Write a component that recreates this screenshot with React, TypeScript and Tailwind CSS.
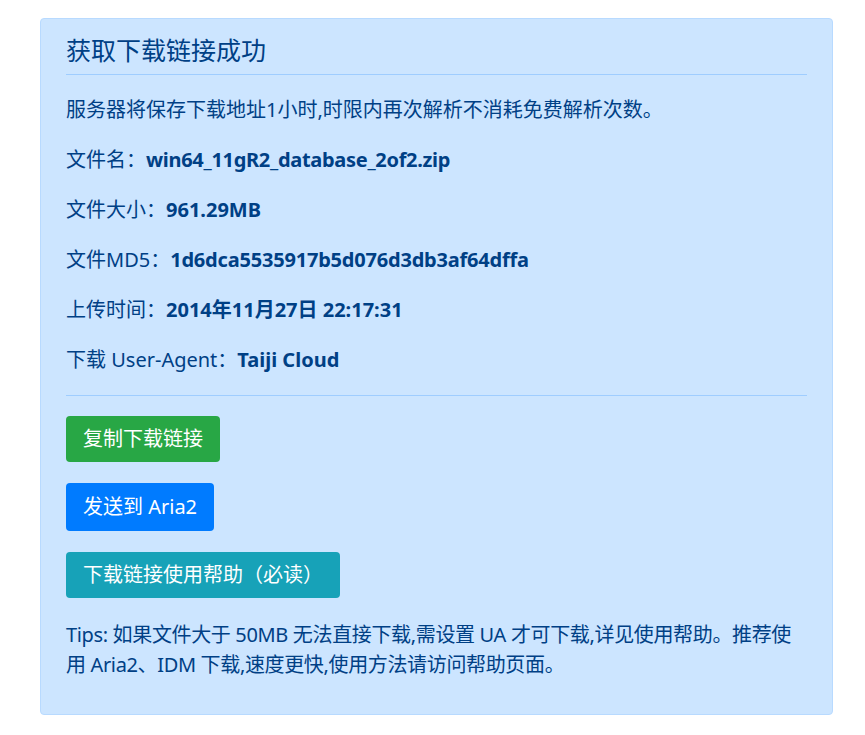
export default function App() {
  const font = { fontFamily: '"Noto Sans", "Noto Sans CJK SC", sans-serif' };
  return (
    <div className="min-h-[735px] bg-white pt-[18px] pl-[40px]" style={font}>
      <div className="w-[793px] rounded-[4px] border border-[#b8daff] bg-[#cce5ff] px-[25px] pt-[16px] pb-[14px] text-[#004085] text-[20px] leading-[30px]">
        <h4 className="text-[25px] leading-[30px] mb-[9px] font-normal">获取下载链接成功</h4>
        <hr className="border-0 border-t border-[#9fcdff] mb-[20px]" />
        <p className="mb-[20px]">服务器将保存下载地址1小时,时限内再次解析不消耗免费解析次数。</p>
        <p className="mb-[20px]">文件名：<b className="font-bold tracking-[-0.3px]">win64_11gR2_database_2of2.zip</b></p>
        <p className="mb-[20px]">文件大小：<b className="font-bold">961.29MB</b></p>
        <p className="mb-[20px]">文件MD5：<b className="font-bold tracking-[-0.2px]">1d6dca5535917b5d076d3db3af64dffa</b></p>
        <p className="mb-[20px]">上传时间：<b className="font-bold">2014年11月27日 22:17:31</b></p>
        <p className="mb-[20px]">下载 User-Agent：<b className="font-bold">Taiji Cloud</b></p>
        <hr className="border-0 border-t border-[#9fcdff] mb-[20px]" />
        <div className="flex flex-col items-start gap-[21px] mb-[22px]">
          <button className="rounded-[4px] bg-[#28a745] px-[17px] py-[8px] text-[20px] leading-[30px] text-white">复制下载链接</button>
          <button className="rounded-[4px] bg-[#007bff] px-[17px] py-[9px] text-[20px] leading-[30px] text-white">发送到 Aria2</button>
          <button className="rounded-[4px] bg-[#17a2b8] px-[17px] py-[8px] text-[20px] leading-[30px] text-white">下载链接使用帮助（必读）</button>
        </div>
        <p className="mb-[20px] tracking-[-0.35px]">Tips: 如果文件大于 50MB 无法直接下载,需设置 UA 才可下载,详见使用帮助。推荐使用 Aria2、IDM 下载,速度更快,使用方法请访问帮助页面。</p>
      </div>
    </div>
  );
}
